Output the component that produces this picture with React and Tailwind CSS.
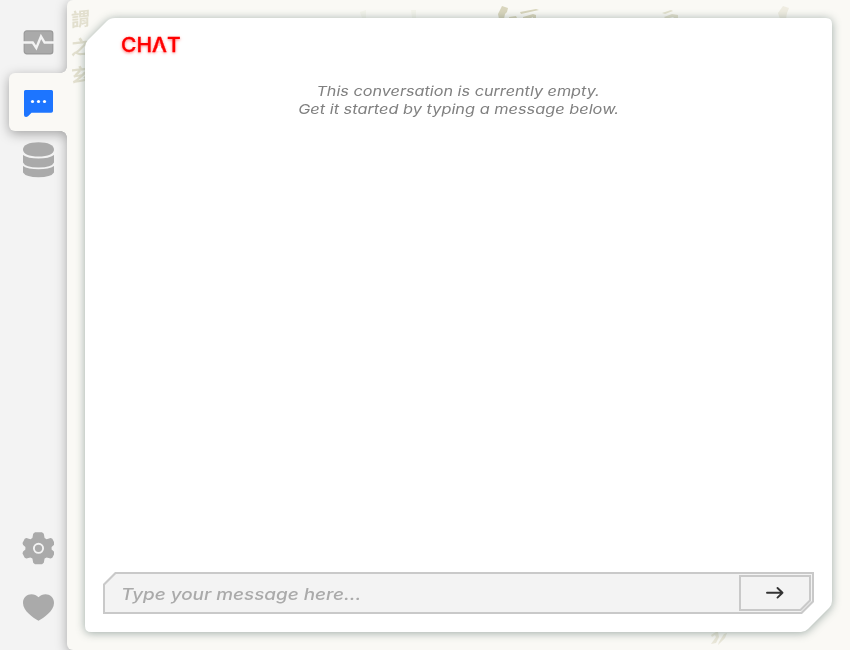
import React from "react";

const Pulse = () => (
  <svg viewBox="0 0 32 28" className="h-7 w-8">
    <rect x="2.200" y="2.900" width="28.600" height="23" rx="2.600" fill="#aaa" stroke="#999" strokeWidth="1.200" />
    <path d="M1 14.500h9.700l3.600 5.500L19 8.500l3.600 6H32" fill="none" stroke="#f3f3f3" strokeWidth="2.400" />
  </svg>
);

const Bubble = () => (
  <svg viewBox="0 0 32 30" className="h-[30px] w-8">
    <path d="M3.500 2h26a1.500 1.500 0 0 1 1.500 1.500v19.500a1.800 1.800 0 0 1-1.800 1.800H9.500L6 28.300Q5 29 4 29 2 29 2 27V3.500Q2 2 3.500 2z" fill="#1d75ff" />
    <circle cx="10.500" cy="13.500" r="1.600" fill="#fff" />
    <circle cx="16.500" cy="13.500" r="1.600" fill="#fff" />
    <circle cx="22.500" cy="13.500" r="1.600" fill="#fff" />
  </svg>
);

const Database = () => (
  <svg viewBox="0 0 32 36" className="h-9 w-8" fill="#aaa">
    <path d="M1 7.500C1 3 7 .2 16.500.2S32 3 32 7.500s-6 7-15.500 7S1 12 1 7.500z" />
    <path d="M1 13Q6 16.500 16.500 16.500T32 13v7.500Q30 25.500 16.500 25.500T1 20.500z" />
    <path d="M1 24Q6 27.300 16.500 27.300T32 24v6.500Q29 35.300 16.500 35.300T1 30.500z" />
  </svg>
);

const Gear = () => (
  <svg viewBox="0 0 32 34" className="h-[34px] w-8">
    <g transform="translate(.5 .3)">
      <path
        d="M12.500 1h7l1.800 1.500.8 4.300 2 1.100 4-1.200 1.700.8 2.200 4.200-.6 2-2.300 2v2.600l2.300 2 .6 2-2.200 4.200-1.700.8-4-1.200-2 1.100-.8 4.300L19.500 33h-7l-1.800-1.500-.8-4.300-2-1.100-4 1.200-1.700-.8L0 22.300l.6-2 2.300-2v-2.600l-2.300-2-.6-2 2.200-4.200 1.700-.8 4 1.200 2-1.100.8-4.300z"
        fill="#aaa"
      />
      <circle cx="16" cy="17" r="4.600" fill="none" stroke="#f3f3f3" strokeWidth="1.900" />
    </g>
  </svg>
);

const Heart = () => (
  <svg viewBox="0 0 32 28" className="h-7 w-8">
    <path d="M16.500 27.700C11.500 25 1 18 1 10 1 .8 11.500-1.200 16.500 4.300 21.500-1.200 32 .8 32 10c0 8-10.500 15-15.500 17.700z" fill="#aaa" />
  </svg>
);

const Brush = () => (
  <svg viewBox="0 0 783 650" className="absolute inset-0 h-full w-full" fill="#d9d5bd">
    <path d="M435 6l6 2-1 4-2 2-1 5h-5l-1-5z" />
    <path d="M442 17l7-1 1 2h-8z" />
    <path d="M453 12l16-3 3 1-18 4zM456 17l10-3 3 1v4h-3v-2l-4 2h-6z" />
    <path d="M595 13l9-3 2 1-8 3zM597 17l8-3 6 1v4h-3l-2-2-7 2z" opacity=".7" />
    <path d="M716 6l6 2-2 5-1 6h-6l-2-6z" opacity=".35" />
    <path d="M644 635l5-3h2l1 5-3 6-5 1 5-7-1-2-3 2zM657 634l3-1-2 5-7 7 1-3z" opacity=".5" />
    <path d="M293 12l6-2v8h-4zM344 10h5v8h-4z" opacity=".15" />
  </svg>
);

export default function App() {
  return (
    <div className="relative flex h-[650px] w-[850px] overflow-hidden bg-[#f3f3f3] font-['Inter',sans-serif]">
      <div className="flex w-full [filter:drop-shadow(0_3px_6px_rgba(0,0,0,0.32))]">
        <nav className="relative flex w-[67px] shrink-0 flex-col items-end">
          <div className="mt-[73px] h-[58px] w-[58px] rounded-l-md bg-[#faf9f5]" />
          <i className="absolute top-[67px] right-0 h-1.5 w-1.5 bg-[radial-gradient(circle_at_0_0,transparent_5.500px,#faf9f5_6px)]" />
          <i className="absolute top-[131px] right-0 h-1.5 w-1.5 bg-[radial-gradient(circle_at_0_100%,transparent_5.500px,#faf9f5_6px)]" />
        </nav>
        <main className="relative flex-1 overflow-hidden rounded-l-md bg-[#faf9f5] pt-[18px] pl-[18px]">
          <Brush />
          <div className="absolute top-[5px] left-[4px] flex origin-top-left -skew-y-6 flex-col font-['Noto_Sans_CJK_TC',sans-serif] text-[19px] leading-[28px] font-bold text-[#e2dfce]" aria-hidden="true">
            <span>謂</span><span>之</span><span>玄</span>
          </div>
          <div className="relative h-[614px] w-[747px] [filter:drop-shadow(0_1px_5px_rgba(40,70,65,0.45))]">
            <section className="flex h-full flex-col bg-white px-[18px] [clip-path:path('M30_0H741Q747_0_747_6V583Q747_587_744_590L723_611Q720_614_716_614H6Q0_614_0_608V29Q0_25_3_22L22_3Q25_0_30_0Z')]">
              <h1 className="mt-[15px] ml-[18px] h-6 origin-left scale-x-[1.050] self-start text-[20px] leading-6 font-medium text-[#f00] [-webkit-text-stroke:0.3px_#f00] [text-shadow:0_1px_3px_rgba(255,0,0,.6)]">
                CH<span className="relative">A<i className="absolute top-[13px] left-[4px] h-[5px] w-[6px] bg-white [clip-path:polygon(25%_0,75%_0,100%_100%,0_100%)]" /></span>T
              </h1>
              <div className="mt-[25px] flex flex-col items-center text-[13.500px] leading-[18px] text-[#808080] italic">
                <p className="scale-x-[1.200] whitespace-nowrap">This conversation is currently empty.</p>
                <p className="scale-x-[1.210] whitespace-nowrap">Get it started by typing a message below.</p>
              </div>
              <div className="mt-auto mb-[18px] h-[42px] w-[711px] bg-[#c9c9c9] p-0.5 [clip-path:polygon(12px_0,100%_0,100%_30px,calc(100%-12px)_100%,0_100%,0_12px)]">
                <div className="flex h-full items-center justify-between bg-[#f3f3f3] pr-px [clip-path:polygon(11px_0,100%_0,100%_27px,calc(100%-11px)_100%,0_100%,0_11px)]">
                  <span className="mt-0.5 ml-[16px] origin-left scale-x-[1.180] text-[16px] font-medium whitespace-nowrap text-[#aaa] italic">Type your message here...</span>
                  <button className="h-9 w-[72px] bg-[#c9c9c9] p-0.5 [clip-path:polygon(0_0,100%_0,100%_26px,62px_100%,0_100%)]">
                    <span className="flex h-full items-center justify-center bg-[#f3f3f3] [clip-path:polygon(0_0,100%_0,100%_23px,59px_100%,0_100%)]">
                      <svg viewBox="0 0 18 14" className="h-3.5 w-[18px]" fill="none" stroke="#333" strokeWidth="1.900" strokeLinecap="round" strokeLinejoin="round"><path d="M1 6.800H16.500M11.500 2l5 4.800-5 4.800" /></svg>
                    </span>
                  </button>
                </div>
              </div>
            </section>
          </div>
        </main>
      </div>
      <div className="absolute inset-y-0 left-[22px] flex w-8 flex-col">
        <div className="mt-[28px] h-7"><Pulse /></div>
        <div className="mt-[32px] h-[30px]"><Bubble /></div>
        <div className="mt-[24px] h-9"><Database /></div>
        <div className="mt-auto h-[34px]"><Gear /></div>
        <div className="mt-[28px] mb-[29px] h-7"><Heart /></div>
      </div>
    </div>
  );
}
